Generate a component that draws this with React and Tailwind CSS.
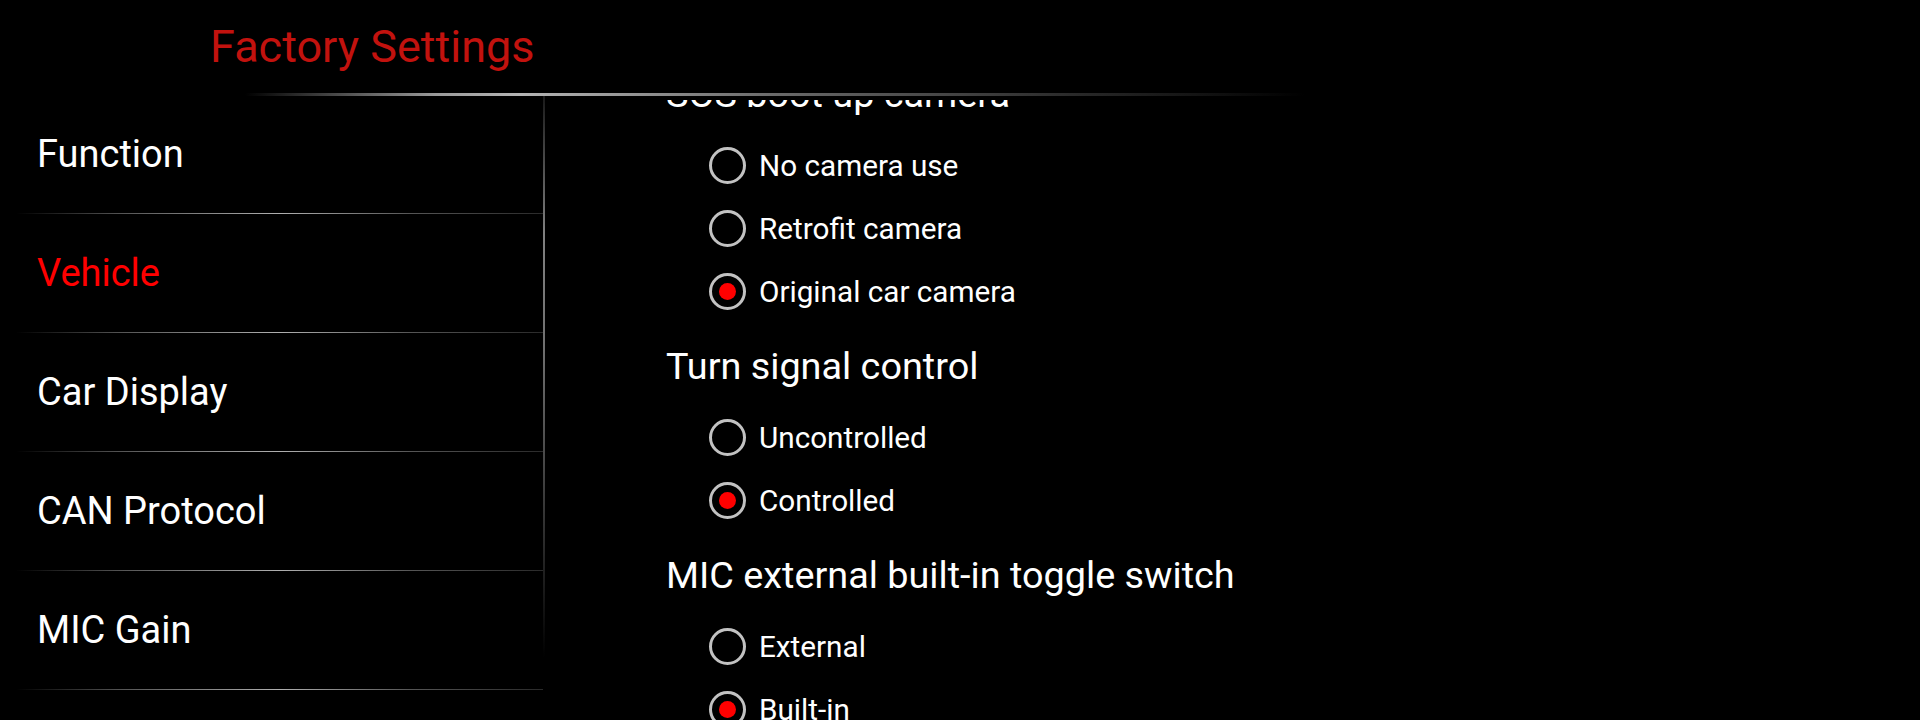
import { useState } from 'react';

const MENU = ['Function', 'Vehicle', 'Car Display', 'CAN Protocol', 'MIC Gain'];

const GROUPS = [
  { title: 'SOS boot up camera', options: ['No camera use', 'Retrofit camera', 'Original car camera'], picked: 2 },
  { title: 'Turn signal control', options: ['Uncontrolled', 'Controlled'], picked: 1 },
  { title: 'MIC external built-in toggle switch', options: ['External', 'Built-in'], picked: 1 },
];

const Radio = ({ on }) => (
  <div className="w-[37px] h-[37px] rounded-full border-[3px] border-[#c2c2c2] flex items-center justify-center shrink-0">
    {on && <div className="w-[17px] h-[17px] rounded-full bg-[#ff0000]" />}
  </div>
);

const Group = ({ group, onPick }) => (
  <div>
    <h2 className="pt-[21px] pb-[18px] text-[37.8px] leading-[44px] text-white whitespace-nowrap">{group.title}</h2>
    <div className="pl-[43px]">
      {group.options.map((opt, i) => (
        <div key={opt} className="h-[63px] flex items-center gap-[13px] cursor-pointer" onClick={() => onPick(i)}>
          <Radio on={group.picked === i} />
          <span className="text-[29.7px] text-white leading-none">{opt}</span>
        </div>
      ))}
    </div>
  </div>
);

export default function App() {
  const [active, setActive] = useState(1);
  const [groups, setGroups] = useState(GROUPS);

  const pick = (g, i) => setGroups(gs => gs.map((x, k) => (k === g ? { ...x, picked: i } : x)));

  return (
    <div className="w-[1920px] h-[720px] bg-black overflow-hidden flex flex-col font-['Roboto','Liberation_Sans',sans-serif]">
      {/* header */}
      <div className="h-[93px] shrink-0 pl-[210px] pt-[21px]">
        <h1 className="text-[45px] leading-[52px] text-[#c2120e]">Factory Settings</h1>
      </div>
      <div className="h-[3px] shrink-0 ml-[245px] w-[1060px] bg-[linear-gradient(to_right,transparent,#9a9a9a_18%,#b4b4b4_26%,#6a6a6a_50%,#2a2a2a_78%,transparent)]" />

      <div className="flex flex-1 min-h-0">
        {/* sidebar */}
        <div className="w-[543px] shrink-0 pl-[16px]">
          {MENU.map((item, i) => (
            <div key={item} className="flex flex-col cursor-pointer" onClick={() => setActive(i)}>
              <div className={`${i === 0 ? 'h-[117px]' : 'h-[118px]'} flex items-center pl-[21px] text-[38px] ${active === i ? 'text-[#ff0000]' : 'text-white'}`}>
                {item}
              </div>
              <div className="h-px bg-[linear-gradient(to_right,transparent,#555_20%,#b0b0b0_50%,#555_75%,#2a2a2a)]" />
            </div>
          ))}
        </div>
        <div className="w-[2px] shrink-0 bg-[linear-gradient(to_bottom,#1a1a1a,#808080_22%,#707070_40%,#2a2a2a_72%,transparent_90%)]" />

        {/* content, scrolled */}
        <div className="flex-1 overflow-hidden pl-[121px] mt-[4px]">
          <div className="-mt-[49px]">
            {groups.map((g, k) => (
              <Group key={g.title} group={g} onPick={i => pick(k, i)} />
            ))}
          </div>
        </div>
      </div>
    </div>
  );
}
